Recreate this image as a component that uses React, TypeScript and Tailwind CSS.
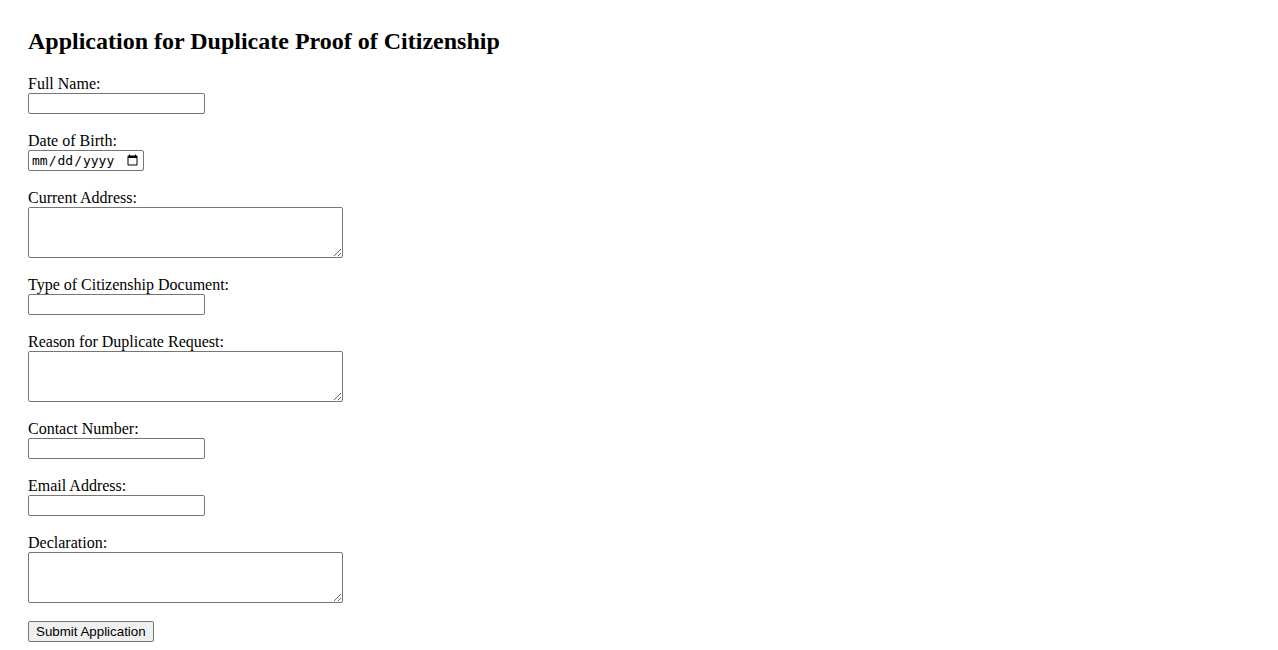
import * as React from "react";

const textInput =
  "block w-[177px] h-[21px] border border-[#767676] rounded-[2px] px-[2px] py-[1px] text-[13.33px] font-['Liberation_Sans',sans-serif] bg-white";
const textArea =
  "block w-[315px] h-[51px] border border-[#767676] rounded-[2px] px-[2px] py-[2px] text-[13.33px] font-['Liberation_Mono',monospace] bg-white resize";
const labelCls = "block leading-[18px]";

function Field({ label, children }: { label: string; children: React.ReactNode }) {
  return (
    <div className="mb-[18px]">
      <label className={labelCls}>{label}</label>
      {children}
    </div>
  );
}

export default function App() {
  return (
    <div className="min-h-screen bg-white text-black font-['Liberation_Serif',serif] text-[16px] px-[28px] pt-[28px]">
      <h2 className="text-[24px] font-bold leading-[27px] mb-[20px]">
        Application for Duplicate Proof of Citizenship
      </h2>
      <form onSubmit={(e) => e.preventDefault()}>
        <Field label="Full Name:">
          <input type="text" className={textInput} />
        </Field>
        <Field label="Date of Birth:">
          <input
            type="date"
            className="block w-[116px] h-[21px] border border-[#767676] rounded-[2px] px-[2px] py-[1px] text-[13px] font-['DejaVu_Sans_Mono',monospace] bg-white"
          />
        </Field>
        <Field label="Current Address:">
          <textarea className={textArea} />
        </Field>
        <Field label="Type of Citizenship Document:">
          <input type="text" className={textInput} />
        </Field>
        <Field label="Reason for Duplicate Request:">
          <textarea className={textArea} />
        </Field>
        <Field label="Contact Number:">
          <input type="tel" className={textInput} />
        </Field>
        <Field label="Email Address:">
          <input type="email" className={textInput} />
        </Field>
        <Field label="Declaration:">
          <textarea className={textArea} />
        </Field>
        <button
          type="submit"
          className="block h-[21px] px-[7px] border border-[#767676] rounded-[2px] bg-[#efefef] text-[13.33px] leading-[17px] font-['Liberation_Sans',sans-serif]"
        >
          Submit Application
        </button>
      </form>
    </div>
  );
}
